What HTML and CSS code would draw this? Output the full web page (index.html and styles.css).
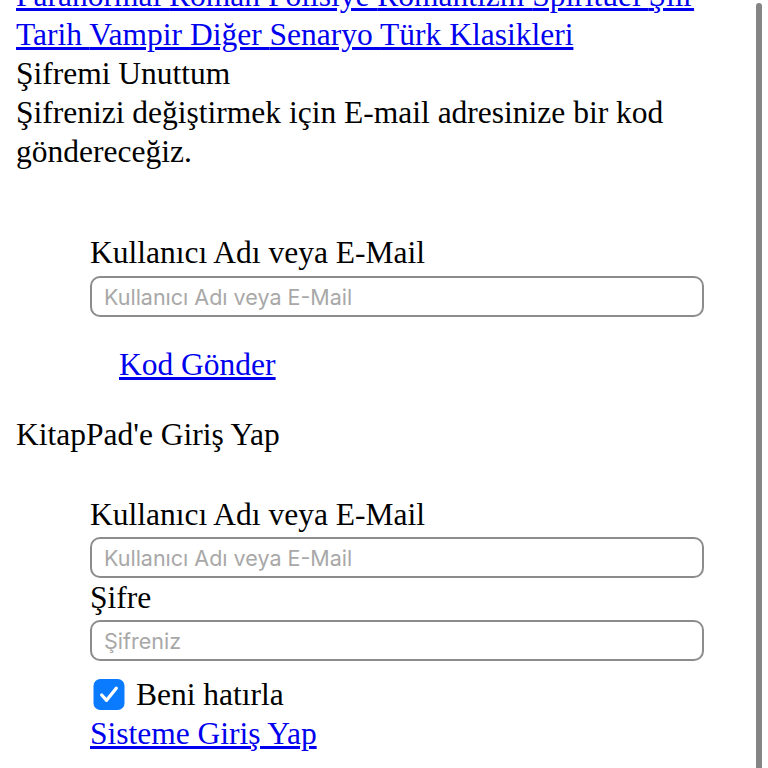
FILE: index.html
```html
<!DOCTYPE html>
<html lang="tr">
<head>
<meta charset="utf-8">
<title>Şifremi Unuttum</title>
<link rel="stylesheet" href="styles.css">
</head>
<body>
<div class="page">
  <p class="cats"><a href="#">Paranormal </a><a href="#">Roman </a><a href="#">Polisiye </a><a href="#">Romantizm </a><a href="#">Spiritüel </a><a href="#">Şiir </a><a href="#">Tarih </a><a href="#">Vampir </a><a href="#">Diğer </a><a href="#">Senaryo </a><a href="#">Türk Klasikleri</a></p>
  <p class="line">Şifremi Unuttum</p>
  <p class="line">Şifrenizi değiştirmek için E-mail adresinize bir kod göndereceğiz.</p>

  <form class="form reset">
    <label class="line" for="r-user">Kullanıcı Adı veya E-Mail</label>
    <input class="field" id="r-user" type="text" placeholder="Kullanıcı Adı veya E-Mail">
    <a class="line send" href="#">Kod Gönder</a>
  </form>

  <p class="line login-title">KitapPad'e Giriş Yap</p>

  <form class="form login">
    <label class="line" for="l-user">Kullanıcı Adı veya E-Mail</label>
    <input class="field" id="l-user" type="text" placeholder="Kullanıcı Adı veya E-Mail">
    <label class="line pw-label" for="l-pw">Şifre</label>
    <input class="field" id="l-pw" type="password" placeholder="Şifreniz">
    <div class="remember line">
      <span class="check"><svg viewBox="0 0 32 32" width="32" height="31"><rect x="0" y="0" width="32" height="32" rx="7" fill="#0a7aff"/><path d="M8.5 16.5 L13.5 22 L23.5 9.5" fill="none" stroke="#fff" stroke-width="3.4" stroke-linecap="round" stroke-linejoin="round"/></svg></span>
      <span>Beni hatırla</span>
    </div>
    <a class="line" href="#">Sisteme Giriş Yap</a>
  </form>
</div>
<div class="scrollbar"></div>
</body>
</html>
```
FILE: styles.css
```css
html, body {
  margin: 0;
  padding: 0;
  background: #fff;
  overflow: hidden;
}
body {
  font-family: "Liberation Serif", "Times New Roman", serif;
  font-size: 31.5px;
  line-height: 39px;
  color: #000;
}
a {
  color: #0000ee;
  text-decoration: underline;
}
p { margin: 0; }
.page {
  margin-top: -24px;
  padding: 0 40px 0 16px;
  width: 712px;
}
.cats { margin: 0; }
.line { display: block; }
.form {
  display: flex;
  flex-direction: column;
  align-items: flex-start;
  padding-left: 74px;
  width: 614px;
}
.reset { margin-top: 62px; }
.field {
  box-sizing: border-box;
  width: 614px;
  height: 41px;
  margin: 4px 0 0;
  padding: 0 12px;
  border: 2px solid #8c8c8c;
  border-radius: 10px;
  font-family: "Inter", "Roboto", sans-serif;
  font-size: 21.5px;
  color: #000;
  background: #fff;
  outline: none;
}
.login .field { margin-top: 3px; }
.field::placeholder { color: #a8a8a8; }
.send {
  margin-top: 28px;
  margin-left: 29px;
}
.login-title { margin-top: 31px; }
.login { margin-top: 41px; }
.pw-label { margin-top: 0; }
.remember {
  display: flex;
  align-items: center;
  gap: 11px;
  margin-top: 14px;
  padding-left: 3px;
}
.check {
  display: flex;
  width: 32px;
  height: 31px;
}
.scrollbar {
  position: fixed;
  top: 3px;
  right: 6px;
  width: 6px;
  height: 780px;
  border-radius: 3px;
  background: #858585;
}
```
